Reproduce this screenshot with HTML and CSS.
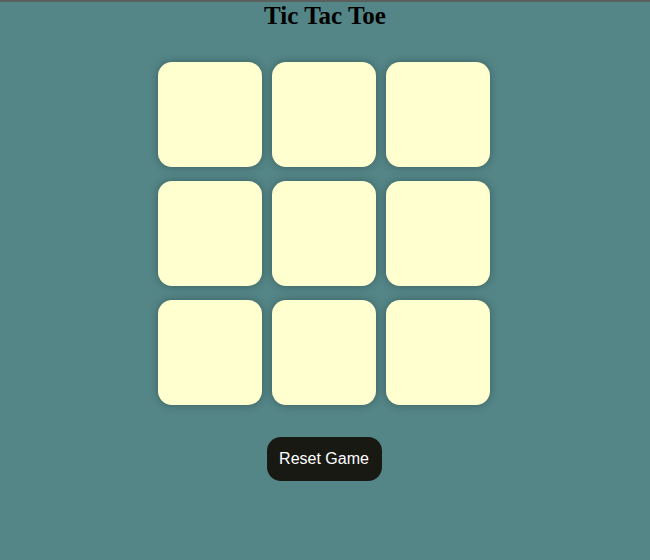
FILE: index.html
```html
<!DOCTYPE html>
<html>
<head>
<meta charset="utf-8">
<link rel="stylesheet" href="styles.css">
</head>
<body>
<main class="game">
  <h1 class="title">Tic Tac Toe</h1>
  <div class="board">
    <button class="box"></button>
    <button class="box"></button>
    <button class="box"></button>
    <button class="box"></button>
    <button class="box"></button>
    <button class="box"></button>
    <button class="box"></button>
    <button class="box"></button>
    <button class="box"></button>
  </div>
  <button class="reset">Reset Game</button>
</main>
</body>
</html>
```
FILE: styles.css
```css
html, body {
  margin: 0;
  padding: 0;
}
body {
  background: #548687;
  border-top: 2px solid #5a5f5f;
  height: 558px;
  overflow: hidden;
}
.game {
  display: flex;
  flex-direction: column;
  align-items: center;
}
.title {
  margin: 0;
  font-family: "Liberation Serif", serif;
  font-weight: bold;
  font-size: 25px;
  line-height: 28px;
  color: #000;
}
.board {
  margin-top: 32px;
  display: grid;
  grid-template-columns: repeat(3, 104px);
  grid-auto-rows: 105px;
  column-gap: 10px;
  row-gap: 14px;
  margin-left: -2px;
}
.box {
  border: none;
  padding: 0;
  background: #ffffd0;
  border-radius: 14px;
  box-shadow: 0 0 8px rgba(0, 0, 0, 0.3);
}
.reset {
  margin-top: 32px;
  margin-left: -2px;
  width: 115px;
  height: 44px;
  border: none;
  border-radius: 14px;
  background: #191914;
  color: #fff;
  font-family: "Liberation Sans", Arial, sans-serif;
  font-size: 16px;
}
```
